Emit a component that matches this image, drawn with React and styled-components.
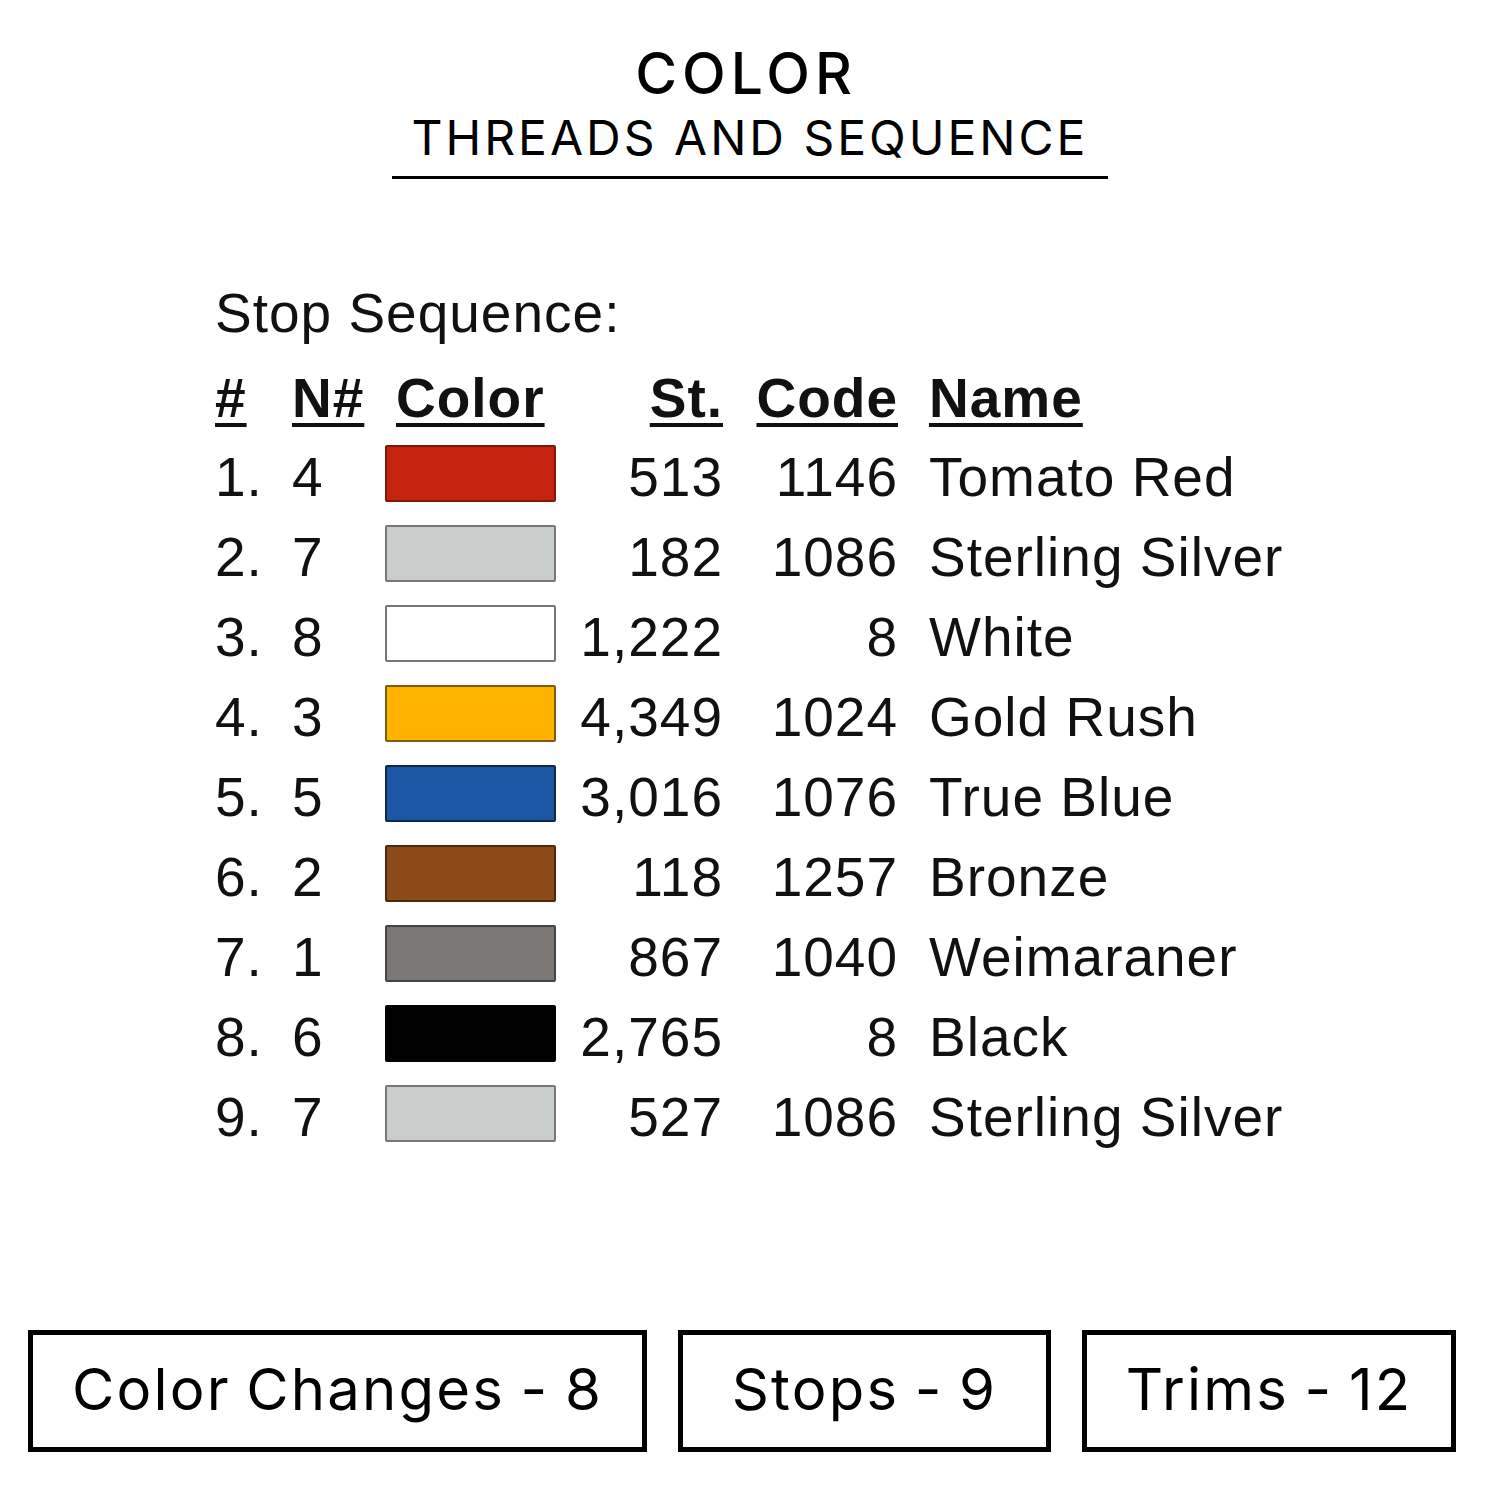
import React from "react";
import styled, { createGlobalStyle } from "styled-components";

const Global = createGlobalStyle`
  html, body { margin: 0; padding: 0; background: #fff; }
  body { width: 1500px; height: 1500px; overflow: hidden; }
`;

const Page = styled.div`
  width: 1500px;
  height: 1500px;
  display: flex;
  flex-direction: column;
  background: #fff;
  color: #000;
`;

const Header = styled.header`
  display: flex;
  flex-direction: column;
  align-items: center;
  padding-top: 44px;
`;

const Title = styled.h1`
  margin: 0 0 0 -8px;
  font-family: Inter, "Noto Sans", sans-serif;
  font-weight: 500;
  font-size: 57px;
  line-height: 60px;
  letter-spacing: 5px;
`;

const Subtitle = styled.h2`
  margin: 6px 0 0;
  padding: 0 20px 10px;
  font-family: Inter, "Noto Sans", sans-serif;
  font-weight: 400;
  font-size: 48px;
  line-height: 56px;
  letter-spacing: 3px;
  border-bottom: 3px solid #000;
`;

const Sheet = styled.section`
  margin: 94px 0 0 215px;
  font-family: "Liberation Sans", Arial, sans-serif;
  font-size: 55px;
  letter-spacing: 1px;
  color: #111;
`;

const Caption = styled.div`
  line-height: 80px;
  margin-bottom: 6px;
`;

const Table = styled.div`
  display: grid;
  grid-template-columns: 77px 93px 190px 147px 175px auto;
  grid-auto-rows: 80px;
  grid-template-rows: 78px;
  align-items: center;
`;

const Cell = styled.div`
  line-height: 80px;
  white-space: nowrap;
  text-align: ${(p) => (p.$right ? "right" : "left")};
  padding-left: ${(p) => p.$pl || 0}px;
  margin-right: ${(p) => (p.$right ? "-1px" : "0")};
`;

const Head = styled(Cell)`
  font-weight: 700;
  line-height: 78px;
  text-decoration: underline;
  text-decoration-thickness: 4px;
  text-underline-offset: 6px;
`;

const HeadLabel = styled.span`
  margin-left: 11px;
`;

const Swatch = styled.div`
  width: 171px;
  height: 57px;
  box-sizing: border-box;
  background: ${(p) => p.$color};
  border: 2px solid ${(p) => p.$edge};
  border-radius: 2px;
  margin-top: -8px;
`;

const Stats = styled.div`
  margin-top: auto;
  margin-bottom: 48px;
  display: flex;
  gap: 31px;
  padding-left: 28px;
`;

const StatBox = styled.div`
  box-sizing: border-box;
  width: ${(p) => p.$w}px;
  height: 122px;
  border: 5px solid #000;
  display: flex;
  align-items: center;
  justify-content: center;
  font-family: Inter, "Noto Sans", sans-serif;
  font-weight: 400;
  font-size: 58px;
  letter-spacing: 2.2px;
  word-spacing: -3px;
  padding-bottom: 4px;
`;

const rows = [
  ["1.", "4", "#c6230e", "#7a1a0c", "513", "1146", "Tomato Red"],
  ["2.", "7", "#c9cdcb", "#777", "182", "1086", "Sterling Silver"],
  ["3.", "8", "#ffffff", "#777", "1,222", "8", "White"],
  ["4.", "3", "#fdb300", "#7a5c10", "4,349", "1024", "Gold Rush"],
  ["5.", "5", "#1c57a3", "#10284a", "3,016", "1076", "True Blue"],
  ["6.", "2", "#8b4a18", "#4a2a10", "118", "1257", "Bronze"],
  ["7.", "1", "#7a7775", "#444", "867", "1040", "Weimaraner"],
  ["8.", "6", "#000000", "#000", "2,765", "8", "Black"],
  ["9.", "7", "#c9cdcb", "#777", "527", "1086", "Sterling Silver"],
];

export default function App() {
  return (
    <Page>
      <Global />
      <Header>
        <Title>COLOR</Title>
        <Subtitle>THREADS AND SEQUENCE</Subtitle>
      </Header>
      <Sheet>
        <Caption>Stop Sequence:</Caption>
        <Table>
          <Head>#</Head>
          <Head>N#</Head>
          <Head><HeadLabel>Color</HeadLabel></Head>
          <Head $right>St.</Head>
          <Head $right>Code</Head>
          <Head $pl={32}>Name</Head>
          {rows.map(([n, nn, c, e, st, code, name], i) => (
            <React.Fragment key={i}>
              <Cell>{n}</Cell>
              <Cell>{nn}</Cell>
              <Swatch $color={c} $edge={e} />
              <Cell $right>{st}</Cell>
              <Cell $right>{code}</Cell>
              <Cell $pl={32}>{name}</Cell>
            </React.Fragment>
          ))}
        </Table>
      </Sheet>
      <Stats>
        <StatBox $w={619}>Color Changes - 8</StatBox>
        <StatBox $w={373}>Stops - 9</StatBox>
        <StatBox $w={374}>Trims - 12</StatBox>
      </Stats>
    </Page>
  );
}
